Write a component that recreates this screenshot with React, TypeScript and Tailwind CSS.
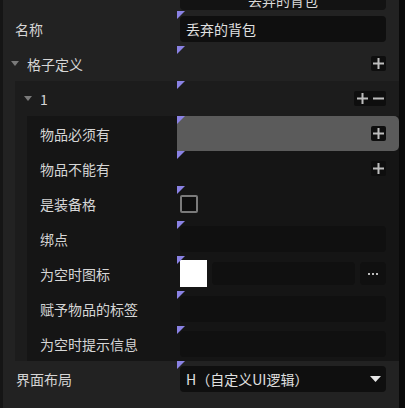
import React from "react";

function Tri() {
  return (
    <svg className="absolute left-0 top-0" width="8" height="8" viewBox="0 0 8 8">
      <polygon points="0,0 8,0 0,8" fill="#8a82e4" />
    </svg>
  );
}

function Arrow() {
  return (
    <svg width="8" height="5" viewBox="0 0 8 5" className="shrink-0">
      <polygon points="0,0 8,0 4,5" fill="#7a7a7a" />
    </svg>
  );
}

function PlusBtn() {
  return (
    <div className="w-[15px] h-[15px] bg-[#0e0e0e] rounded-[2px] flex items-center justify-center">
      <svg width="11" height="11" viewBox="0 0 11 11">
        <rect x="0" y="4.5" width="11" height="2" fill="#bdbdbd" />
        <rect x="4.5" y="0" width="2" height="11" fill="#bdbdbd" />
      </svg>
    </div>
  );
}

function Row({
  labelW,
  label,
  children,
  highlight,
}: {
  labelW: string;
  label: React.ReactNode;
  children?: React.ReactNode;
  highlight?: boolean;
}) {
  return (
    <div className="flex h-[35px]">
      <div className={`${labelW} shrink-0 flex items-center`}>{label}</div>
      <div
        className={`relative flex-1 flex items-center pl-[3px] pr-[13px] ${
          highlight ? "bg-[#5b5b5b] rounded-r-[5px]" : ""
        }`}
      >
        <Tri />
        {children}
      </div>
    </div>
  );
}

function Input({ children, dark }: { children?: React.ReactNode; dark?: boolean }) {
  return (
    <div
      className={`flex-1 h-[26px] rounded-[4px] flex items-center pl-[6px] text-[14px] text-[#e0e0e0] ${
        dark ? "bg-[#101010]" : "bg-[#0f0f0f]"
      }`}
    >
      {children}
    </div>
  );
}

export default function App() {
  return (
    <div className="w-[405px] h-[408px] overflow-hidden flex bg-[#0a0a0a] font-['Noto_Sans_CJK_SC','Noto_Sans',sans-serif] text-[14px] text-[#d6d6d6] leading-none">
      <div className="w-[3px] bg-[#151515]" />
      <div className="w-[396px] bg-[#222222] flex flex-col">
        {/* partial top row */}
        <div className="h-[11px] flex overflow-hidden">
          <div className="w-[174px] shrink-0" />
          <div className="flex-1 pl-[3px] pr-[13px]">
            <div className="h-[26px] -mt-[16px] rounded-[4px] bg-[#131313] flex items-center justify-center text-[#d8d8d8] pt-[6px]">
              丢弃的背包
            </div>
          </div>
        </div>
        <Row labelW="w-[174px] pl-[12px]" label="名称">
          <Input>丢弃的背包</Input>
        </Row>
        <Row
          labelW="w-[174px] pl-[8px] gap-[8px]"
          label={
            <>
              <Arrow />
              <span>格子定义</span>
            </>
          }
        >
          <div className="flex-1" />
          <PlusBtn />
        </Row>
        <div className="ml-[12px] bg-[#1c1c1c] flex flex-col">
          <Row
            labelW="w-[162px] pl-[9px] gap-[8px]"
            label={
              <>
                <Arrow />
                <span>1</span>
              </>
            }
          >
            <div className="flex-1" />
            <div className="flex bg-[#0e0e0e] rounded-[2px] h-[15px] w-[32px]">
              <div className="w-[16px] h-[15px] flex items-center justify-center">
                <svg width="11" height="11" viewBox="0 0 11 11">
                  <rect x="0" y="4.5" width="11" height="2" fill="#bdbdbd" />
                  <rect x="4.5" y="0" width="2" height="11" fill="#bdbdbd" />
                </svg>
              </div>
              <div className="w-[16px] h-[15px] flex items-center justify-center">
                <svg width="11" height="11" viewBox="0 0 11 11">
                  <rect x="0" y="4.5" width="11" height="2" fill="#bdbdbd" />
                </svg>
              </div>
            </div>
          </Row>
          <div className="ml-[12px] bg-[#151515] flex flex-col">
            <Row labelW="w-[150px] pl-[13px]" label="物品必须有" highlight>
              <div className="flex-1" />
              <PlusBtn />
            </Row>
            <Row labelW="w-[150px] pl-[13px]" label="物品不能有">
              <div className="flex-1" />
              <PlusBtn />
            </Row>
            <Row labelW="w-[150px] pl-[13px]" label="是装备格">
              <div className="w-[18px] h-[18px] border-2 border-[#7a7a7a] rounded-[2px] bg-[#0d0d0d]" />
            </Row>
            <Row labelW="w-[150px] pl-[13px]" label="绑点">
              <Input dark />
            </Row>
            <Row labelW="w-[150px] pl-[13px]" label="为空时图标">
              <div className="w-[27px] h-[27px] bg-white mr-[5px]" />
              <div className="flex-1 h-[23px] rounded-[4px] bg-[#101010] mr-[5px]" />
              <div className="w-[26px] h-[23px] rounded-[4px] bg-[#101010] flex items-center justify-center gap-[2px]">
                <div className="w-[2px] h-[2px] bg-[#bbbbbb]" />
                <div className="w-[2px] h-[2px] bg-[#bbbbbb]" />
                <div className="w-[2px] h-[2px] bg-[#bbbbbb]" />
              </div>
            </Row>
            <Row labelW="w-[150px] pl-[13px]" label="赋予物品的标签">
              <Input dark />
            </Row>
            <Row labelW="w-[150px] pl-[13px]" label="为空时提示信息">
              <Input dark />
            </Row>
          </div>
        </div>
        <Row labelW="w-[174px] pl-[13px]" label="界面布局">
          <div className="flex-1 h-[26px] rounded-[4px] bg-[#0f0f0f] flex items-center pl-[6px] pr-[5px] text-[#e0e0e0]">
            <span className="flex-1">H（自定义UI逻辑）</span>
            <svg width="11" height="6" viewBox="0 0 11 6">
              <polygon points="0,0 11,0 5.5,6" fill="#e6e6e6" />
            </svg>
          </div>
        </Row>
      </div>
      <div className="flex-1 bg-[#0a0a0a]" />
    </div>
  );
}
